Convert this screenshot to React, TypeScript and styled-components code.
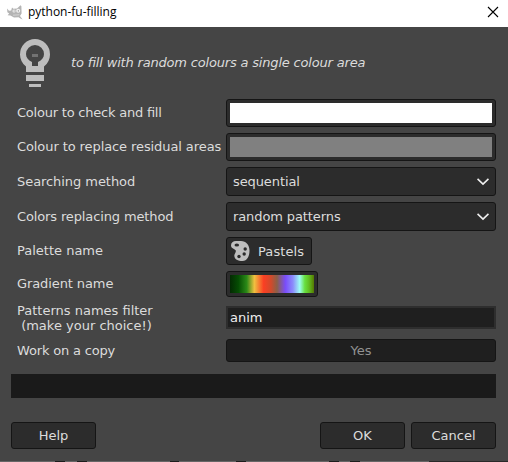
import React from "react";
import styled, { createGlobalStyle } from "styled-components";

const GlobalStyle = createGlobalStyle`
  * { box-sizing: border-box; }
  html, body { margin: 0; background: #454545; }
  button, input { font: inherit; letter-spacing: inherit; margin: 0; }
`;

const Dialog = styled.main`
  width: 508px;
  height: 462px;
  display: flex;
  flex-direction: column;
  overflow: hidden;
  background: #454545;
  color: #dcdcdc;
  font: 13px/15px "DejaVu Sans", sans-serif;
  font-feature-settings: "liga" 1;
  white-space: pre;
`;

const TitleBar = styled.header`
  height: 27px;
  flex: none;
  display: flex;
  align-items: center;
  padding: 0 9px 3px 6px;
  background: #fff;
  color: #000;
  font: 12px/16px "Open Sans", "Noto Sans", sans-serif;
  font-feature-settings: normal;
`;

const WindowTitle = styled.span`
  margin-left: 5px;
  flex: 1;
  letter-spacing: -0.02px;
`;

const CloseButton = styled.button`
  display: flex;
  padding: 0;
  border: 0;
  background: none;
`;

const Intro = styled.section`
  height: 72px;
  flex: none;
  display: flex;
  align-items: center;
  padding-left: 19px;
  font-style: italic;
`;

const IntroText = styled.p`
  margin: 0 0 1px 20px;
  letter-spacing: -0.18px;
`;

const Form = styled.div`
  display: grid;
  grid-template-columns: 209px 270px;
  grid-template-rows: 34px 34px 35px 35px 34px 31px 36px 24px;
  padding-left: 17px;
  align-items: center;
  height: 263px;
  flex: none;
`;

const Label = styled.label<{ $lift?: number; $track?: number }>`
  padding-bottom: ${(p) => p.$lift ?? 7}px;
  letter-spacing: ${(p) => p.$track ?? 0}px;
`;

const Button = styled.button<{ $w: number; $h: number }>`
  width: ${(p) => p.$w}px;
  height: ${(p) => p.$h}px;
  display: flex;
  align-items: center;
  justify-content: center;
  align-self: start;
  padding: 0;
  border: 1px solid #151515;
  border-radius: 3px;
  background: #2c2c2c;
  color: #dcdcdc;
`;

const ColourSwatch = styled.span<{ $colour: string }>`
  width: 262px;
  height: 20px;
  background: ${(p) => p.$colour};
`;

const Combo = styled(Button)`
  justify-content: space-between;
  padding: 0 6px;
  letter-spacing: -0.1px;
`;

const PaletteButton = styled(Button)`
  justify-content: flex-start;
  padding-left: 4px;
  gap: 8px;
  letter-spacing: 0.1px;
`;

const GradientSwatch = styled.span`
  width: 84px;
  height: 18px;
  background: linear-gradient(90deg, #032a02 0%, #054d03 10%, #2b8a18 20%, #f0c040 29%, #fb3f23 40%, #d04a2c 49%, #8a6048 56%, #7a4dfb 66%, #8c8dfb 75%, #9dfdf4 83%, #68e040 89%, #62bd20 94%, #547802 100%);
`;

const Entry = styled.input`
  width: 270px;
  height: 23px;
  align-self: start;
  margin-top: 4px;
  padding: 0 2px 1px;
  border: 2px solid #2e2e2e;
  border-radius: 0;
  outline: 0;
  background: #1f1f1f;
  color: #eee;
`;

const Toggle = styled(Button)`
  margin-top: 1px;
  background: #1f1f1f;
  color: #929292;
`;

const Progress = styled.div`
  height: 24px;
  flex: none;
  margin: 12px 12px 0 11px;
  background: #1a1a1a;
`;

const Actions = styled.footer`
  display: flex;
  gap: 6px;
  height: 27px;
  flex: none;
  margin: 24px 12px 12px 11px;
`;

const Spacer = styled.div`
  flex: 1;
`;

const BottomEdge = styled.div`
  height: 1px;
  flex: none;
  background: linear-gradient(90deg, #666 55px, #1d1d1d 55px 65px, #666 65px 77px, #1d1d1d 77px 87px, #666 87px 170px, #1d1d1d 170px 179px, #666 179px 236px, #1d1d1d 236px 246px, #666 246px 329px, #1d1d1d 329px 339px, #666 339px 350px, #1d1d1d 350px 360px, #666 360px 429px, #292929 429px);
`;

const WilberIcon = () => (
  <svg width="17" height="16" viewBox="0 0 17 16">
    <path d="M1 4.5 3 6.8 5.2 6.4 6 3.4 7.4 4.8 11 4.4 14.5 1.2 15.4 2.2 15.6 9.5 14 12 16.6 15.6 14.4 14.6 12.6 13.2 8 13.4 4.4 11.6 1.6 11.2 3.2 9.6 1.4 8.2Z" fill="#b4b4b4" />
    <circle cx="8" cy="7" r="1.5" fill="#f2f2f2" />
    <circle cx="12.2" cy="6.8" r="2" fill="#f2f2f2" />
    <path d="M7.6 7h1.1M11.8 6.9h1.2" stroke="#999" strokeWidth="1.1" />
    <path d="M7 11.2 13.4 10.8" stroke="#ddd" strokeWidth=".8" />
  </svg>
);

const BulbIcon = () => (
  <svg width="32" height="50" viewBox="0 0 32 50">
    <path fillRule="evenodd" fill="#bebebe" d="M7 34V28.5C3 25.5 1 21 1 16.5A15 15.5 0 0 1 31 16.5C31 21 29 25.5 25 28.5V34ZM13 28H19V24C23 22 25 19.5 25 16A9 9 0 0 0 7 16C7 19.5 9 22 13 24Z" />
    <path fill="#bebebe" d="M7 37h18v6H7zM10 46h12v3H10z" />
    <path fill="#737373" d="M13 16h6v3h-6z" />
  </svg>
);

const Chevron = () => (
  <svg width="12" height="8" viewBox="0 0 12 8">
    <path d="M.5 .9 6 6 11.5 .9" fill="none" stroke="#eee" strokeWidth="1.7" />
  </svg>
);

const PaletteIcon = () => (
  <svg width="19" height="20" viewBox="0 0 19 20">
    <path fill="#bebebe" d="M5 0H10C15 0 18.5 4 18.5 9.5C18.5 15.5 16 20 11.5 20C7 20 3.3 18.4 3.3 14.5C3.3 12.7 5.5 11.2 4.7 9.3C4.1 7.8 0 7.6 0 4.4C0 1.8 2 0 5 0Z" />
    <g fill="#2c2c2c">
      <ellipse cx="5.8" cy="3.9" rx="2.3" ry="1.5" />
      <circle cx="14.2" cy="8" r="1.7" />
      <circle cx="13.2" cy="13" r="1.7" />
      <circle cx="8" cy="15.5" r="1.7" />
    </g>
  </svg>
);

export default function App() {
  return (
    <>
      <GlobalStyle />
      <Dialog>
        <TitleBar>
          <WilberIcon />
          <WindowTitle>python-fu-filling</WindowTitle>
          <CloseButton aria-label="Close">
            <svg width="12" height="12" viewBox="0 0 12 12">
              <path d="M1 1 11 11M11 1 1 11" stroke="#000" strokeWidth="1.1" />
            </svg>
          </CloseButton>
        </TitleBar>
        <Intro>
          <BulbIcon />
          <IntroText>to fill with random colours a single colour area</IntroText>
        </Intro>
        <Form>
          <Label $track={-0.22}>Colour to check and fill</Label>
          <Button $w={270} $h={28}><ColourSwatch $colour="#fff" /></Button>
          <Label $track={-0.09}>Colour to replace residual areas</Label>
          <Button $w={270} $h={28}><ColourSwatch $colour="#808080" /></Button>
          <Label $track={-0.06}>Searching method</Label>
          <Combo $w={270} $h={29}>sequential<Chevron /></Combo>
          <Label $track={-0.13}>Colors replacing method</Label>
          <Combo $w={270} $h={29}>random patterns<Chevron /></Combo>
          <Label>Palette name</Label>
          <PaletteButton $w={86} $h={28}><PaletteIcon />Pastels</PaletteButton>
          <Label $track={-0.1}>Gradient name</Label>
          <Button $w={92} $h={26}><GradientSwatch /></Button>
          <Label $lift={4}>{"Patterns names filter\n (make your choice!)"}</Label>
          <Entry defaultValue="anim" />
          <Label $lift={0} $track={-0.17}>Work on a copy</Label>
          <Toggle $w={270} $h={23}>Yes</Toggle>
        </Form>
        <Progress />
        <Actions>
          <Button $w={85} $h={27}>Help</Button>
          <Spacer />
          <Button $w={85} $h={27}>OK</Button>
          <Button $w={85} $h={27}>Cancel</Button>
        </Actions>
        <BottomEdge />
      </Dialog>
    </>
  );
}
